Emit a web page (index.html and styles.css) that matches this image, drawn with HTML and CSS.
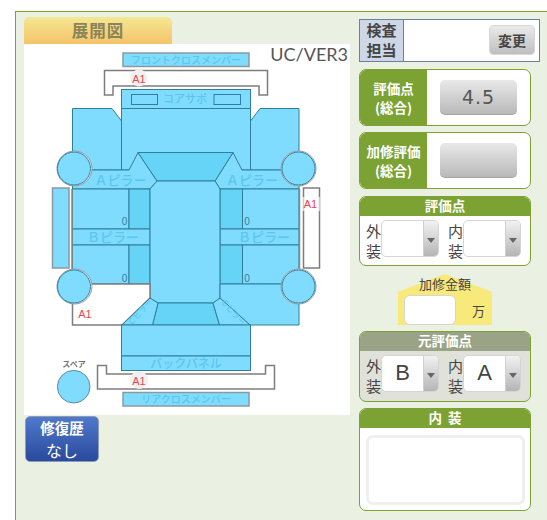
FILE: index.html
```html
<!DOCTYPE html>
<html lang="ja">
<head>
    <meta charset="UTF-8">
    <meta name="viewport" content="width=device-width, initial-scale=1.0">
    <title>展開図</title>
    <link rel="stylesheet" href="styles.css">
</head>
<body>
    <div class="panel">
        <div class="left-col">
            <div class="map-title">展開図</div>
            <div class="map">
                <svg class="car" viewBox="24 44 326 371" width="326" height="371">
                    <!-- front -->
                    <rect class="part shade" x="123" y="53" width="126" height="13.5"/>
                    <text class="label" x="186" y="63.5" font-size="10">フロントクロスメンバー</text>
                    <path class="bumper" d="M104.5 95V70.5H267.5V95H259V86H113V95Z"/>
                    <circle class="mark" cx="139" cy="78" r="8.5"/>
                    <text class="alert" x="139" y="82.5">A1</text>
                    <rect class="part" x="121.5" y="89.5" width="129" height="19"/>
                    <rect class="part" x="131.5" y="94.5" width="26" height="10"/>
                    <rect class="part" x="214" y="94.5" width="26.5" height="10"/>
                    <text class="label" x="185" y="103" font-size="11">コアサポ</text>

                    <!-- fenders and hood -->
                    <path class="part" d="M72.5 108.5H112L121.5 121V108.5H250.5V121L260 108.5H299V170H72.5Z"/>
                    <path class="line" d="M121.5 121V170M250.5 121V170"/>

                    <!-- pillars and windshield -->
                    <path class="part" d="M92 170H129L138 152.5L157 181L150 189H72.5V170Z"/>
                    <path class="part" d="M233 152.5L242 170H299V189H220L215 181Z"/>
                    <path class="part dark" d="M138 152.5H233L215 181H157Z"/>
                    <text class="label" x="120.5" y="184.5" font-size="13">Ａピラー</text>
                    <text class="label" x="252" y="184.5" font-size="13">Ａピラー</text>

                    <!-- doors -->
                    <rect class="part" x="72.5" y="189" width="56.5" height="40"/>
                    <rect class="part dark" x="129" y="189" width="21" height="40"/>
                    <rect class="part" x="72.5" y="229" width="77.5" height="16"/>
                    <rect class="part" x="72.5" y="245" width="56.5" height="39"/>
                    <rect class="part dark" x="129" y="245" width="21" height="39"/>
                    <rect class="part" x="242.5" y="189" width="56.5" height="40"/>
                    <rect class="part dark" x="220" y="189" width="22.5" height="40"/>
                    <rect class="part" x="220" y="229" width="79" height="16"/>
                    <rect class="part" x="242.5" y="245" width="56.5" height="39"/>
                    <rect class="part dark" x="220" y="245" width="22.5" height="39"/>
                    <path class="outline" d="M72 189V272M299.5 189V272"/>
                    <text class="label" x="113" y="241.5" font-size="13">Ｂピラー</text>
                    <text class="label" x="264" y="241.5" font-size="13">Ｂピラー</text>
                    <text class="count" x="124.5" y="225">0</text>
                    <text class="count" x="124.5" y="282">0</text>
                    <text class="count" x="247" y="225">0</text>
                    <text class="count" x="247" y="282">0</text>

                    <!-- roof -->
                    <path class="part" d="M157 181H215L220 189V298L213 303H158L150 298V189Z"/>

                    <!-- rear quarters -->
                    <path class="bumper" d="M92 284H150V298L122 325H72.5V304"/>
                    <text class="alert" x="85" y="318">A1</text>
                    <path class="part" d="M220 284H299V325H250L220 298Z"/>
                    <path class="part dark" d="M158 303H213L219.5 325H152.5Z"/>
                    <path class="part" d="M150 298L158 303L152.5 325H122Z"/>
                    <path class="part" d="M220 298L213 303L219.5 325H250Z"/>
                    <text class="label" font-size="8" transform="translate(142 314) rotate(-48)">Ｃピラー</text>
                    <text class="label" font-size="8" transform="translate(231 314) rotate(48)">Ｃピラー</text>

                    <!-- wheels -->
                    <circle class="ring" cx="74.5" cy="168.5" r="17.5"/>
                    <circle class="ring" cx="298.5" cy="168.5" r="17.5"/>
                    <circle class="ring" cx="74.5" cy="286.5" r="17.5"/>
                    <circle class="ring" cx="298.5" cy="286.5" r="17.5"/>
                    <circle class="part" cx="74" cy="168.5" r="16.5"/>
                    <circle class="part" cx="298.5" cy="168.5" r="16.5"/>
                    <circle class="part" cx="74" cy="286.5" r="16.5"/>
                    <circle class="part" cx="298.5" cy="286.5" r="16.5"/>

                    <!-- rockers -->
                    <rect class="part shade" x="52.5" y="188" width="16.5" height="80"/>
                    <rect class="bumper" x="303.5" y="188" width="16" height="80"/>
                    <rect class="blank" x="302" y="197" width="18" height="14"/>
                    <text class="alert" x="310.5" y="208">A1</text>

                    <!-- rear -->
                    <rect class="part" x="121.5" y="325" width="129" height="31"/>
                    <rect class="part" x="121.5" y="356" width="129" height="14.5"/>
                    <text class="label" x="186" y="368" font-size="12">バックパネル</text>
                    <path class="bumper" d="M97.5 365.5H106.5V374H265.5V365.5H274.5V389H97.5Z"/>
                    <circle class="mark" cx="139" cy="380" r="9"/>
                    <text class="alert" x="139" y="384.5">A1</text>
                    <rect class="part shade" x="123" y="392.5" width="126" height="13.5"/>
                    <text class="label" x="186" y="403" font-size="10">リアクロスメンバー</text>

                    <!-- spare -->
                    <text class="spare-label" x="74" y="367">スペア</text>
                    <circle class="part spare" cx="73.7" cy="386.7" r="16.3"/>
                </svg>
                <div class="version">UC/VER3</div>
            </div>
            <div class="history-btn">
                <b>修復歴</b>
                <span>なし</span>
            </div>
        </div>

        <div class="right-col">
            <div class="inspector">
                <div class="inspector-label">検査担当</div>
                <div class="inspector-value">
                    <div class="change-btn">変更</div>
                </div>
            </div>

            <div class="score-box">
                <div class="score-label">評価点<br>(総合)</div>
                <div class="score-value"><div class="score-btn">4.5</div></div>
            </div>
            <div class="score-box">
                <div class="score-label">加修評価<br>(総合)</div>
                <div class="score-value"><div class="score-btn"></div></div>
            </div>

            <div class="box">
                <div class="box-head">評価点</div>
                <div class="pick-row">
                    <span class="pick-label">外装</span>
                    <div class="pick"><span class="pick-text"></span><span class="pick-arrow"></span></div>
                    <span class="pick-label">内装</span>
                    <div class="pick"><span class="pick-text"></span><span class="pick-arrow"></span></div>
                </div>
            </div>

            <div class="price">
                <div class="price-title">加修金額</div>
                <div class="price-row">
                    <div class="price-input"></div>
                    <span class="price-unit">万</span>
                </div>
            </div>

            <div class="box box-old">
                <div class="box-head">元評価点</div>
                <div class="pick-row">
                    <span class="pick-label">外装</span>
                    <div class="pick"><span class="pick-text">B</span><span class="pick-arrow"></span></div>
                    <span class="pick-label">内装</span>
                    <div class="pick"><span class="pick-text">A</span><span class="pick-arrow"></span></div>
                </div>
            </div>

            <div class="box box-note">
                <div class="box-head">内 装</div>
                <div class="note"></div>
            </div>
        </div>
    </div>
</body>
</html>
```

FILE: styles.css
```css
html, body {
    height: 520px;
    overflow: hidden;
}

body {
    margin: 0;
    background: #ffffff;
    color: #444444;
    font-family: "Noto Sans CJK JP", "Liberation Sans", sans-serif;
}

.panel {
    display: flex;
    gap: 9px;
    box-sizing: border-box;
    width: 532px;
    height: 509px;
    margin: 11px 0 0 15px;
    padding: 5px 0 0 8px;
    background: #eaf1e3;
    border-top: 1px solid #7ba232;
    border-left: 1px solid #7ba232;
}

.left-col {
    width: 326px;
}

.map-title {
    width: 148px;
    height: 27px;
    border-radius: 5px 5px 0 0;
    background: linear-gradient(#f3e893, #f6c36a);
    color: #8a8458;
    font-size: 16.5px;
    font-weight: 700;
    line-height: 27px;
    text-align: center;
    letter-spacing: 1px;
}

.map {
    position: relative;
    height: 371px;
    background: #ffffff;
}

.car {
    display: block;
}

.part {
    fill: #7fdcff;
    stroke: #2f7f9c;
    stroke-width: 1;
}

.dark {
    fill: #66d4f7;
}

.shade {
    stroke: #8a9aa0;
    stroke-width: 1.5;
}

.line {
    fill: none;
    stroke: #2f7f9c;
}

.outline {
    fill: none;
    stroke: #888888;
    stroke-width: 1.5;
}

.bumper {
    fill: #ffffff;
    stroke: #7d7d7d;
    stroke-width: 1.5;
}

.ring {
    fill: #ffffff;
    stroke: #999999;
    stroke-width: 1;
}

.mark {
    fill: #f0f0f0;
}

.blank {
    fill: #ffffff;
    fill-opacity: 0.6;
}

.spare {
    stroke: #5f8a99;
}

.label {
    fill: #5cc6ee;
    font-weight: 500;
    text-anchor: middle;
}

.alert {
    fill: #f0444e;
    font-family: "Liberation Sans", sans-serif;
    font-size: 11px;
    text-anchor: middle;
}

.count {
    fill: #2f7f9c;
    font-family: "Liberation Sans", sans-serif;
    font-size: 10px;
    text-anchor: middle;
}

.spare-label {
    fill: #777777;
    font-size: 8px;
    font-weight: 700;
    text-anchor: middle;
}

.version {
    position: absolute;
    top: 0;
    right: 2px;
    color: #555555;
    font-family: Lato, sans-serif;
    font-size: 18px;
    line-height: 20px;
}

.history-btn {
    box-sizing: border-box;
    display: flex;
    flex-direction: column;
    align-items: center;
    width: 74px;
    height: 46px;
    margin: 1px 0 0 1px;
    border: 1px solid #8d9cb5;
    border-radius: 5px;
    background: linear-gradient(#5079cb, #2a4a9c);
    color: #ffffff;
}

.history-btn b {
    font-size: 14.5px;
    line-height: 21px;
}

.history-btn span {
    margin-top: 1px;
    font-size: 16px;
    line-height: 22px;
}

.right-col {
    display: flex;
    flex-direction: column;
    width: 181px;
    padding-top: 2px;
}

.inspector {
    box-sizing: border-box;
    display: flex;
    height: 43px;
    border: 1px solid #6b7f9e;
    background: #ffffff;
}

.inspector-label {
    box-sizing: border-box;
    width: 44px;
    padding: 0 6px;
    border-right: 1px solid #6b7f9e;
    background: #cdd7e6;
    font-size: 15px;
    font-weight: 700;
    line-height: 20px;
    text-align: center;
}

.inspector-value {
    flex: 1;
    display: flex;
    justify-content: flex-end;
    padding: 5px 4px 0 0;
}

.change-btn {
    width: 46px;
    height: 30px;
    border-radius: 5px;
    background: linear-gradient(#ececec, #bdbdbd);
    box-shadow: inset 0 0 0 1px #d8d8d8;
    font-size: 14px;
    font-weight: 700;
    line-height: 30px;
    text-align: center;
}

.score-box {
    box-sizing: border-box;
    display: flex;
    width: 172px;
    height: 57px;
    margin-top: 6px;
    border: 1px solid #7ba232;
    border-radius: 7px;
    background: #ffffff;
    overflow: hidden;
}

.inspector + .score-box {
    margin-top: 7px;
}

.score-label {
    width: 67px;
    background: #7ba232;
    color: #ffffff;
    font-size: 13.5px;
    font-weight: 700;
    line-height: 19px;
    padding-top: 9px;
    text-align: center;
    white-space: nowrap;
}

.score-value {
    flex: 1;
    padding: 10px 0 0 13px;
}

.score-btn {
    width: 77px;
    height: 35px;
    border-radius: 5px;
    border-bottom: 1px solid #a5a5a5;
    box-sizing: border-box;
    background: linear-gradient(#e9e9e9, #b9b9b9);
    color: #555555;
    font-family: "DejaVu Sans", sans-serif;
    font-size: 19px;
    letter-spacing: 1px;
    line-height: 34px;
    text-align: center;
}

.box {
    box-sizing: border-box;
    width: 172px;
    height: 70px;
    margin-top: 7px;
    border: 1px solid #7ba232;
    border-radius: 7px;
    background: #ffffff;
    overflow: hidden;
}

.box-head {
    height: 19px;
    background: #7ba232;
    color: #ffffff;
    font-size: 13.5px;
    font-weight: 700;
    line-height: 17px;
    text-align: center;
}

.pick-row {
    display: flex;
    padding: 4px 0 0 6px;
}

.pick-label {
    width: 15px;
    padding-top: 1px;
    font-size: 15px;
    line-height: 20px;
    word-break: break-all;
}

.pick {
    box-sizing: border-box;
    display: flex;
    width: 59px;
    height: 37px;
    margin-right: 9px;
    border: 1px solid #d5d5d5;
    border-radius: 5px;
    background: #ffffff;
    overflow: hidden;
}

.pick-text {
    flex: 1;
    font-family: "Liberation Sans", sans-serif;
    font-size: 22px;
    line-height: 33px;
    text-align: center;
}

.pick-arrow {
    position: relative;
    width: 14px;
    border-left: 1px solid #d0d0d0;
    background: linear-gradient(#f2f2f2, #b5b5b5);
}

.pick-arrow::after {
    content: "";
    position: absolute;
    left: 3px;
    top: 17px;
    border-style: solid;
    border-width: 5px 4px 0;
    border-color: #666666 transparent transparent;
}

.price {
    position: relative;
    box-sizing: border-box;
    width: 94px;
    height: 51px;
    margin: 8px 0 0 39px;
}

.price::before {
    content: "";
    position: absolute;
    inset: 0;
    background: #f8ea7a;
    clip-path: polygon(50% 0, 100% 35%, 100% 100%, 0 100%, 0 35%);
}

.price-title {
    position: relative;
    font-size: 13px;
    line-height: 19px;
    margin-bottom: 2px;
    text-align: center;
    white-space: nowrap;
}

.price-row {
    position: relative;
    display: flex;
    align-items: center;
    padding-left: 6px;
}

.price-input {
    box-sizing: border-box;
    width: 52px;
    height: 30px;
    border: 1px solid #d5d5d5;
    border-radius: 6px;
    background: #ffffff;
}

.price-unit {
    margin-left: 16px;
    font-size: 13px;
}

.box-old {
    height: 71px;
    margin-top: 6px;
    background: #e0e2da;
}

.box-old .box-head {
    background: #9aa386;
}

.box-note {
    height: 103px;
    margin-top: 6px;
}

.box-note .box-head {
    word-spacing: 3px;
}

.note {
    box-sizing: border-box;
    width: 159px;
    height: 70px;
    margin: 7px 0 0 6px;
    border: 3px solid #efefef;
    border-radius: 7px;
}
```
